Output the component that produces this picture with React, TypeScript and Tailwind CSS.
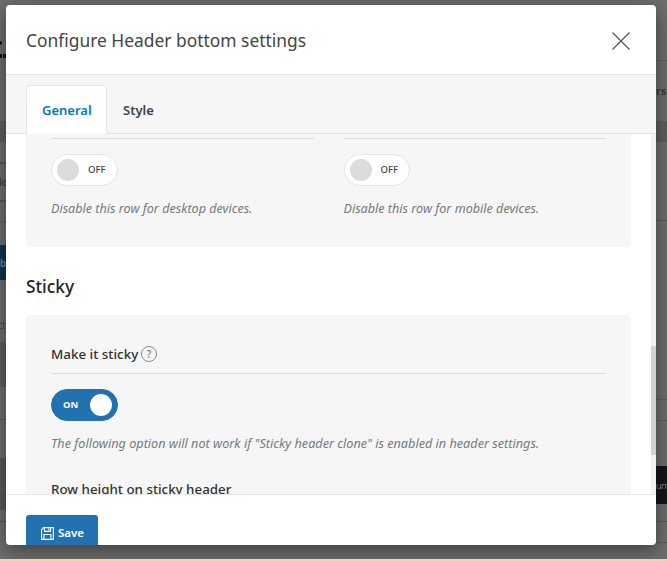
import React, { useState } from 'react';

const Toggle: React.FC<{ defaultOn?: boolean }> = ({ defaultOn = false }) => {
  const [on, setOn] = useState(defaultOn);

  return (
    <button
      role="switch"
      aria-checked={on}
      onClick={() => setOn(!on)}
      className={`flex h-8 items-center rounded-full border text-[9.5px] ${
        on
          ? 'w-[67px] flex-row-reverse justify-between border-[#2271b1] bg-[#2271b1] pl-[11px] pr-[5px] font-bold text-white'
          : 'w-[66.5px] justify-between border-[#e5e5e5] bg-white pl-[5px] pr-[11px] font-medium text-[#3c434a]'
      }`}
    >
      <span className={`h-[22px] w-[22px] rounded-full ${on ? 'bg-white' : 'bg-[#dcdcde]'}`} />
      <span>{on ? 'ON' : 'OFF'}</span>
    </button>
  );
};

const SaveIcon: React.FC = () => (
  <svg width="13" height="13" viewBox="0 0 13 13" fill="none" stroke="currentColor" strokeWidth="1.1">
    <path d="M2.6.6h9.8v11.8H.6V2.6z" />
    <path d="M3.5.6v3.8h6V.6M3 12.4V7.5h7v4.9M7.7 1.5v1.8" />
  </svg>
);

// Dimmed page peeking out on the left of the dialog
const PageLeft: React.FC = () => (
  <div className="flex w-1.5 flex-col overflow-hidden">
    <div className="flex h-[121px] flex-col pt-[41px]">
      <span className="h-1 w-0.5 rounded-r-full bg-[#111] blur-[0.6px]" />
      <span className="mt-[9px] flex gap-px blur-[0.6px]">
        <i className="h-1 w-0.5 bg-[#111]" />
        <i className="h-1 w-[3px] bg-[#111]" />
      </span>
    </div>
    <div className="h-[21px] bg-[#5f5f5f]" />
    <div className="mt-5 h-[40px] border-y-2 border-[#40606f] pt-2.5 text-[11px] leading-4 tracking-[-0.5px] text-[#3c3c3c] blur-[0.5px]">
      <span className="-ml-px">le</span>
    </div>
    <div className="mt-[19px] h-px bg-[#5d5d5d]" />
    <div className="mt-[23px] h-[35px] bg-[#123452] pt-2.5 text-[10px] font-bold leading-4 text-[#6b7f90]">
      <span className="blur-[0.5px]">b</span>
    </div>
    <div className="h-[62px] pt-[37px] text-[10px] leading-4 tracking-[-0.5px] text-[#4a4a4a] blur-[0.5px]">
      <span className="-ml-0.5">ct</span>
    </div>
    <div className="h-[45px] bg-[#5e5e5e]" />
    <div className="mt-[32px] h-px bg-[#575757]" />
    <div className="mt-[38px] h-[52px] bg-[#5a5a5a]" />
    <div className="mt-[11px] h-px bg-[#555]" />
  </div>
);

const PageRight: React.FC = () => (
  <div className="flex w-[11px] flex-col overflow-hidden">
    <div className="h-[61px] border-b border-[#5f5f5f]" />
    <div className="h-[60px] pt-[22px] text-[11px] font-bold leading-4 text-[#3a3a3a] blur-[0.5px]">rs</div>
    <div className="h-[21px] bg-[#5f5f5f]" />
    <div className="h-[79px] border-b border-[#5a5a5a]" />
    <div className="h-[179px] border-b border-[#5e5e5e]" />
    <div className="h-[21px] border-b border-[#5e5e5e]" />
    <div className="h-[45px]" />
    <div className="h-[38px] bg-[#14161a] pt-3 text-[9px] leading-4 tracking-[-0.5px] text-[#858585]">
      <span className="blur-[0.5px]">unt</span>
    </div>
    <div className="h-[18px] border-b border-[#5a5a5a]" />
    <div className="h-[21px] border-b border-[#5a5a5a]" />
  </div>
);

const DeviceOption: React.FC<{ text: string }> = ({ text }) => (
  <div className="flex-1 border-t border-[#dcdcde] pt-[15px]">
    <Toggle />
    <p className="mt-[13px] text-[12.6px] italic leading-5 text-[#757a7e]">{text}</p>
  </div>
);

export default function App() {
  const [tab, setTab] = useState('General');

  return (
    <div className="relative h-[561px] w-[667px] overflow-hidden bg-[#6e6e6e] font-['Noto_Sans','Open_Sans',sans-serif]">
      <div className="flex h-[559px] justify-between">
        <PageLeft />
        <PageRight />
      </div>

      <div className="absolute left-1.5 top-[5px] flex h-[540px] w-[650px] flex-col overflow-hidden rounded bg-white shadow-[0_5px_20px_rgba(0,0,0,0.45)]">
        <header className="flex h-[70px] shrink-0 items-center justify-between border-b border-[#e6e6e6] pl-5 pr-[26px]">
          <h1 className="pt-px text-[17.4px] text-[#444]">Configure Header bottom settings</h1>
          <button aria-label="Close" className="pt-0.5">
            <svg width="18" height="18" viewBox="0 0 18 18" stroke="#555" strokeWidth="1.2">
              <path d="M.5.5l17 17M17.5.5l-17 17" />
            </svg>
          </button>
        </header>

        <nav className="flex h-[59px] shrink-0 items-end border-b border-[#e2e2e2] bg-[#f6f6f6] pl-5 text-[13px] font-semibold">
          {['General', 'Style'].map((name) => (
            <button
              key={name}
              onClick={() => setTab(name)}
              className={`rounded-t ${
                tab === name
                  ? '-mb-px h-[49px] w-[81px] border border-b-0 border-[#e6e6e6] bg-white px-[15px] pt-0.5 text-[#007cba]'
                  : 'h-12 px-4 pt-[3px] text-[#3c434a]'
              }`}
            >
              {name}
            </button>
          ))}
        </nav>

        <div className="flex h-[360px] shrink-0 overflow-hidden">
          <main className="flex-1 pl-5 pr-5">
            <section className="flex h-[113px] gap-[30px] rounded-b-[5px] bg-[#f6f6f6] px-[25px] pt-1">
              <DeviceOption text="Disable this row for desktop devices." />
              <DeviceOption text="Disable this row for mobile devices." />
            </section>

            <h2 className="mt-7 text-[17.3px] font-medium leading-6 text-[#1d2327]">Sticky</h2>

            <section className="mt-4 rounded-[5px] bg-[#f6f6f6] px-[25px] pb-10 pt-7">
              <div className="flex h-[31px] items-start gap-[3px] border-b border-[#dcdcde]">
                <h3 className="w-[87px] whitespace-nowrap text-[13.4px] font-medium leading-[22px] text-[#333]">Make it sticky</h3>
                <span className="mt-[3px] flex h-4 w-4 items-center justify-center rounded-full border border-[#8c8c8c] text-[10px] font-medium text-[#777]">?</span>
              </div>
              <div className="mt-[15px]">
                <Toggle defaultOn />
              </div>
              <p className="mt-3 whitespace-nowrap text-[12.67px] italic leading-5 text-[#757a7e]">
                The following option will not work if "Sticky header clone" is enabled in header settings.
              </p>
              <h3 className="mt-[25px] text-[13.35px] font-medium leading-[22px] text-[#333]">Row height on sticky header</h3>
            </section>
          </main>
          <div className="w-[5px] bg-[#f1f1f1] pt-[212px]">
            <div className="h-[109px] bg-[#d2d2d2]" />
          </div>
        </div>

        <footer className="h-[51px] shrink-0 border-t border-[#e6e6e6] pl-5 pt-5">
          <button className="flex h-9 w-[72px] items-center gap-1 rounded-[3px] bg-[#2271b1] pl-[15px] text-[11.5px] font-semibold text-white">
            <SaveIcon />
            Save
          </button>
        </footer>
      </div>

      <div className="relative h-0.5 bg-[#f6d3a3]" />
    </div>
  );
}
